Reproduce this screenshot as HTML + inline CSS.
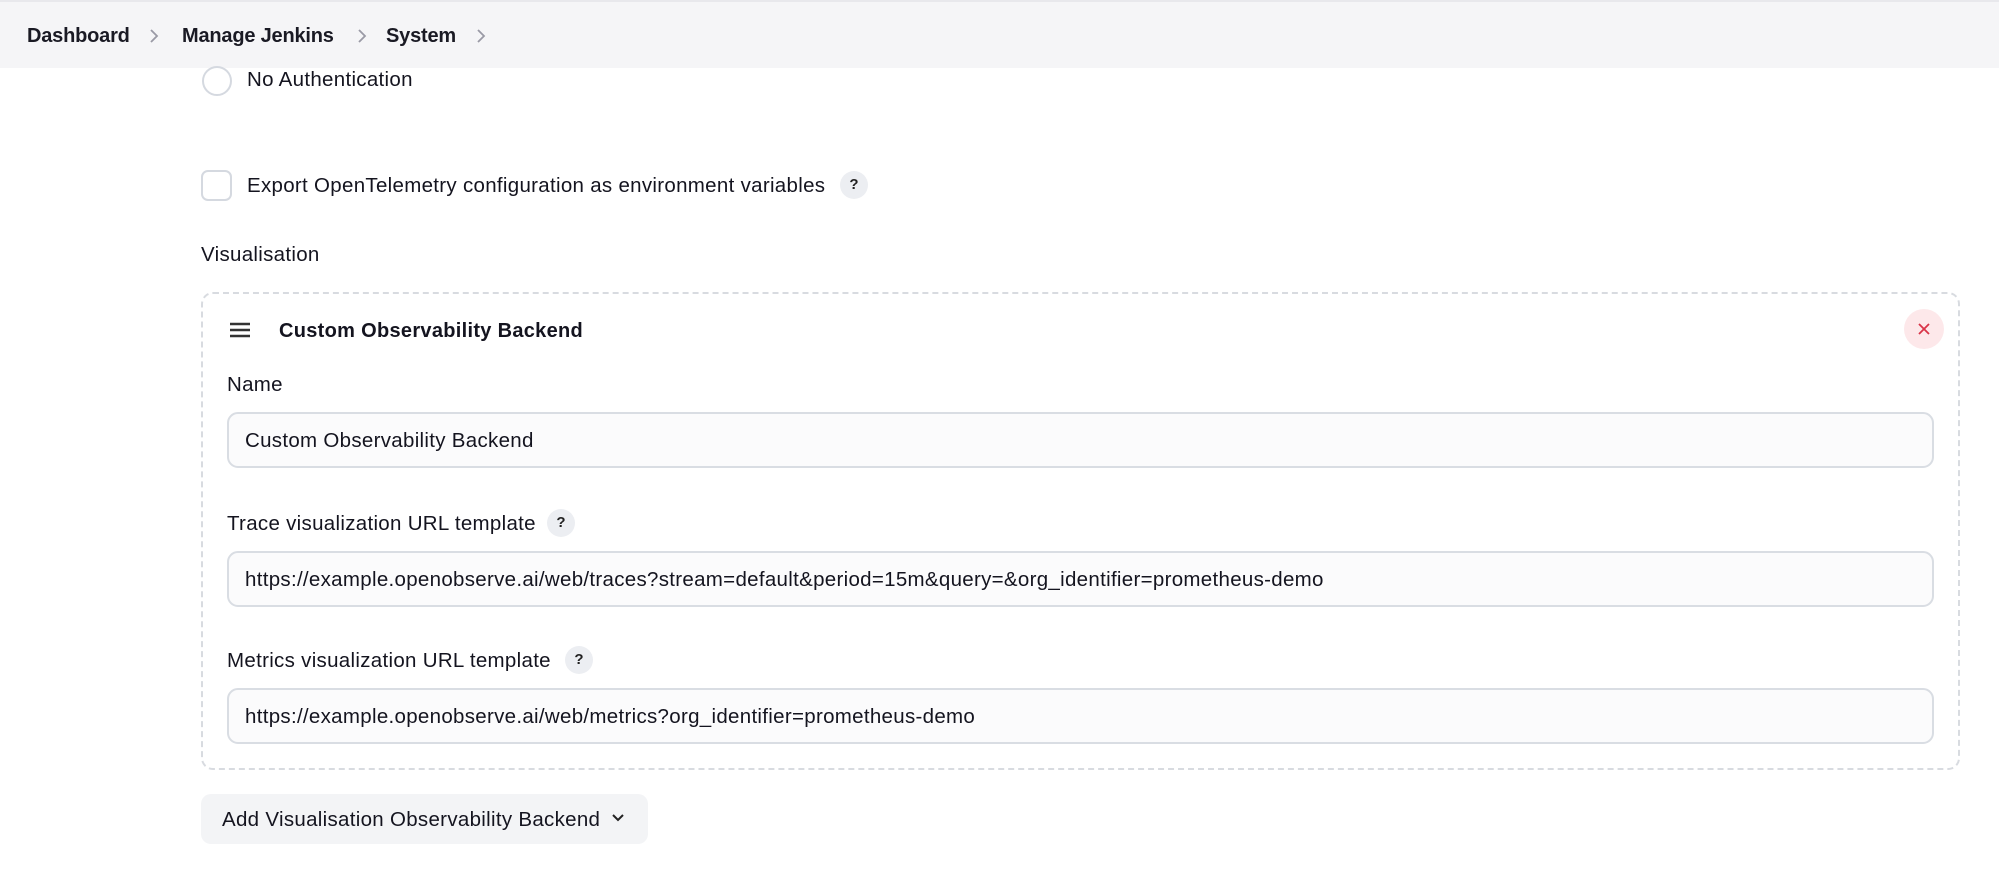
<!DOCTYPE html>
<html><head><meta charset="utf-8"><style>
*{box-sizing:border-box;margin:0;padding:0}
body{width:1999px;height:875px;background:#fff;font-family:"Liberation Sans",Arial,sans-serif;color:#14141f;position:relative;overflow:hidden}
.hdr{position:absolute;left:0;top:0;width:1999px;height:68px;background:#f5f5f7;border-top:2px solid #e8e8ec}
.bc{position:absolute;top:25px;font-size:20px;font-weight:bold;color:#1a1a24;letter-spacing:-0.2px}
.chev{position:absolute;top:27px}
.t{position:absolute;font-size:20.5px;letter-spacing:0.3px;white-space:nowrap;line-height:24px}
.help{position:absolute;width:28px;height:28px;border-radius:50%;background:#eceef2;font-size:15px;font-weight:bold;text-align:center;line-height:28px;color:#222}
.inp{position:absolute;left:227px;width:1707px;height:56px;border:2px solid #d9dde3;border-radius:11px;background:#fbfbfc;font-size:20.5px;letter-spacing:0.3px;padding-left:16px;line-height:54px;color:#14141f;white-space:nowrap}
</style></head><body>
<div class="hdr"></div>
<div class="bc" style="left:27px">Dashboard</div>
<svg class="chev" style="left:148px" width="12" height="18" viewBox="0 0 12 18"><path d="M3 3l6 6-6 6" fill="none" stroke="#9a9aa5" stroke-width="1.8"/></svg>
<div class="bc" style="left:182px">Manage Jenkins</div>
<svg class="chev" style="left:356px" width="12" height="18" viewBox="0 0 12 18"><path d="M3 3l6 6-6 6" fill="none" stroke="#9a9aa5" stroke-width="1.8"/></svg>
<div class="bc" style="left:386px">System</div>
<svg class="chev" style="left:475px" width="12" height="18" viewBox="0 0 12 18"><path d="M3 3l6 6-6 6" fill="none" stroke="#9a9aa5" stroke-width="1.8"/></svg>

<div style="position:absolute;left:202px;top:66px;width:30px;height:30px;border-radius:50%;border:2px solid #d5d9e0;background:#fff"></div>
<div class="t" style="left:247px;top:68px">No Authentication</div>

<div style="position:absolute;left:201px;top:170px;width:31px;height:31px;border-radius:7px;border:2px solid #d5d9e0;background:#fff"></div>
<div class="t" style="left:247px;top:174px">Export OpenTelemetry configuration as environment variables</div>
<div class="help" style="left:840px;top:171px">?</div>

<div class="t" style="left:201px;top:243px">Visualisation</div>

<div style="position:absolute;left:201px;top:292px;width:1759px;height:478px;border:2px dashed #d8dbe0;border-radius:12px"></div>
<svg style="position:absolute;left:229px;top:322px" width="22" height="16" viewBox="0 0 22 16"><path d="M1 2h20M1 8h20M1 14h20" stroke="#333" stroke-width="2.4"/></svg>
<div class="t" style="left:279px;top:319px;font-weight:bold;font-size:20px">Custom Observability Backend</div>
<div style="position:absolute;left:1904px;top:309px;width:40px;height:40px;border-radius:50%;background:#fde8ea"></div>
<svg style="position:absolute;left:1918px;top:323px" width="12" height="12" viewBox="0 0 12 12"><path d="M1 1l10 10M11 1L1 11" stroke="#d93448" stroke-width="1.8"/></svg>

<div class="t" style="left:227px;top:373px">Name</div>
<div class="inp" style="top:412px">Custom Observability Backend</div>

<div class="t" style="left:227px;top:512px">Trace visualization URL template</div>
<div class="help" style="left:547px;top:509px">?</div>
<div class="inp" style="top:551px">https://example.openobserve.ai/web/traces?stream=default&amp;period=15m&amp;query=&amp;org_identifier=prometheus-demo</div>

<div class="t" style="left:227px;top:649px">Metrics visualization URL template</div>
<div class="help" style="left:565px;top:646px">?</div>
<div class="inp" style="top:688px">https://example.openobserve.ai/web/metrics?org_identifier=prometheus-demo</div>

<div style="position:absolute;left:201px;top:794px;width:447px;height:50px;border-radius:10px;background:#f3f4f6"></div>
<div class="t" style="left:222px;top:808px">Add Visualisation Observability Backend</div>
<svg style="position:absolute;left:611px;top:813px" width="14" height="10" viewBox="0 0 14 10"><path d="M2 2l5 5 5-5" fill="none" stroke="#222" stroke-width="2"/></svg>
</body></html>
